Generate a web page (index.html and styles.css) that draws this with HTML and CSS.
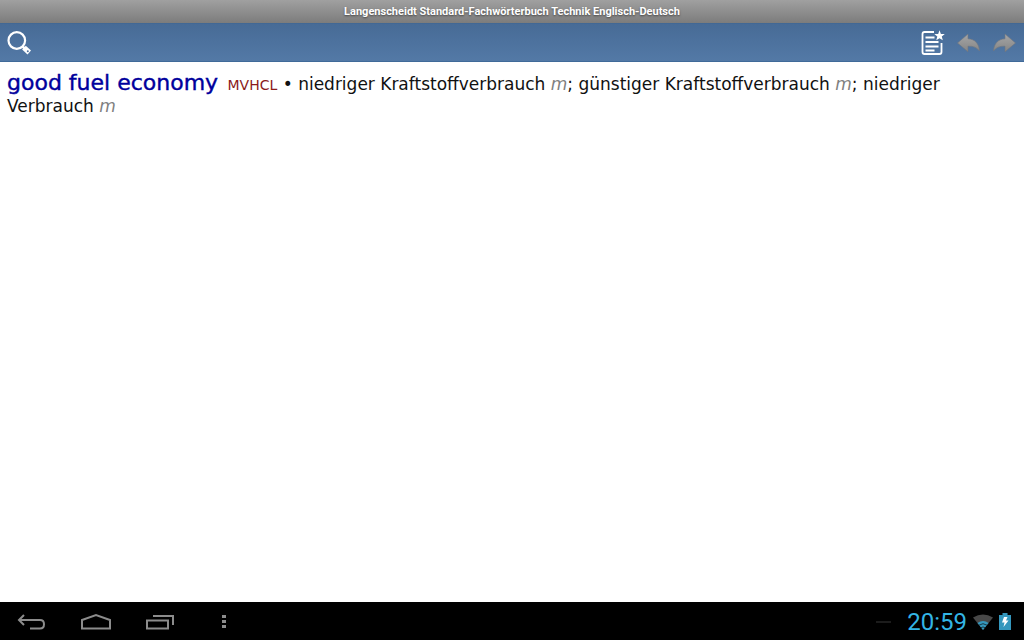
FILE: index.html
```html
<!DOCTYPE html>
<html lang="de">
<head>
<meta charset="utf-8">
<title>Langenscheidt Standard-Fachwörterbuch Technik Englisch-Deutsch</title>
<link rel="stylesheet" href="styles.css">
</head>
<body>
<header>
  <h1 class="title">Langenscheidt Standard-Fachwörterbuch Technik Englisch-Deutsch</h1>
  <div class="toolbar">
    <button class="tool" type="button" aria-label="Search">
      <svg width="26" height="26" viewBox="0 0 26 26" fill="none" stroke="#fff"><circle cx="10.8" cy="10.5" r="8.3" stroke-width="2.2"/><path d="M16.500 16.300l2 2" stroke-width="2.400"/><path d="M19.800 15.800l5.200 4.800-3.500 4-5.400-5z" fill="#fff" stroke="none"/><circle cx="21.800" cy="21.300" r="1" fill="#4d729f" stroke="none"/></svg>
    </button>
    <div class="group">
      <button class="tool" type="button" aria-label="Favorites">
        <svg width="26" height="26" viewBox="0 0 26 26" fill="none" stroke="#fff"><path d="M15 2H5.500Q3.500 2 3.500 4V22Q3.500 24 5.500 24H20.500Q22.500 24 22.500 22V13" stroke-width="1.800"/><path d="M6.500 7.500h9M6.500 12h13M6.500 16.500h13M6.500 20.500h9" stroke-width="2"/><path d="M20.500 .300l1.400 3.600 3.900.2-3 2.500 1 3.700-3.300-2.100-3.200 2.100 1-3.700-3-2.500 3.900-.2z" fill="#fff" stroke="none"/></svg>
      </button>
      <button class="tool" type="button" aria-label="Back">
        <svg width="26" height="26" viewBox="0 0 26 26"><defs><linearGradient id="g" x2="0" y2="1"><stop offset="0" stop-color="#a6a6a6"/><stop offset="1" stop-color="#858585"/></linearGradient></defs><path fill="url(#g)" stroke="#6f7680" stroke-width=".6" d="M2.500 13L13 4v4.800c7 .5 11 4.700 11.500 12.200-2.500-3.500-6-5-11.500-4.800v5.600z"/></svg>
      </button>
      <button class="tool" type="button" aria-label="Forward">
        <svg width="26" height="26" viewBox="0 0 26 26"><path fill="url(#g)" stroke="#6f7680" stroke-width=".6" d="M24.500 13L14 4v4.800C7 9.300 3 13.500 2.500 21c2.500-3.500 6-5 11.500-4.800v5.600z"/></svg>
      </button>
    </div>
  </div>
</header>
<main class="entry">
  <p><b class="headword">good fuel economy</b> <span class="domain">MVHCL</span> • niedriger Kraftstoffverbrauch <i>m</i>; günstiger Kraftstoffverbrauch <i>m</i>; niedriger Verbrauch <i>m</i></p>
</main>
<footer class="system">
  <nav class="keys">
    <button type="button" aria-label="Back"><svg width="32" height="20" viewBox="0 0 32 20"><path d="M8 2L3 7l5 5M3.500 7H24q4 0 4 4.200T24 15.500H14"/></svg></button>
    <button type="button" aria-label="Home"><svg width="32" height="20" viewBox="0 0 32 20"><path d="M2 15.500V7L16 2l14 5v8.500z"/></svg></button>
    <button type="button" aria-label="Recent apps"><svg width="32" height="20" viewBox="0 0 32 20"><path d="M3 7.500h21v8H3zM9 3h20v9"/></svg></button>
    <button type="button" aria-label="Menu"><svg width="32" height="20" viewBox="0 0 32 20"><path class="dots" d="M14 2h4v3h-4zM14 7h4v3h-4zM14 12h4v3h-4z"/></svg></button>
  </nav>
  <div class="status">
    <span class="dash"></span>
    <time>20:59</time>
    <svg width="20" height="18" viewBox="0 0 20 18"><path fill="#484848" d="M0 4.500Q10-1.500 20 4.500L10 17z"/><path fill="#3497bd" d="M4.500 10q5.500-4 11 0L10 17z"/><path fill="none" stroke="#163744" d="M6 12.200q4-3 8 0M8 14.700q2-1.500 4 0"/></svg>
    <svg width="12" height="18" viewBox="0 0 12 18"><path fill="#3497bd" d="M3.500 0h5v2H12v15H0V2h3.500z"/><path fill="#fff" d="M5 4L3 9.500h2.500L4.500 14l5-6.500H7L8.500 4z"/></svg>
  </div>
</footer>
</body>
</html>
```
FILE: styles.css
```css
* { box-sizing: border-box; }

body {
  margin: 0;
  min-height: 100vh;
  display: flex;
  flex-direction: column;
  background: #fff;
  font-family: "DejaVu Sans", sans-serif;
}

button {
  display: flex;
  padding: 0;
  border: 0;
  background: none;
  cursor: pointer;
}

.title {
  margin: 0;
  background: linear-gradient(#a0a0a0, #7c7c7c);
  color: #fff;
  font: bold 11px/23px Roboto, sans-serif;
  text-align: center;
  text-shadow: 0 1px 2px #444;
}

.toolbar {
  display: flex;
  justify-content: space-between;
  align-items: center;
  height: 39px;
  padding: 0 7px 0 6px;
  border-top: 1px solid #426894;
  border-bottom: 1px solid #406a99;
  background: linear-gradient(#476b96, #5379a6);
}

.group {
  display: flex;
  gap: 10px;
}

.entry {
  flex: 1;
  padding: 10px 7px;
  font-size: 17px;
  line-height: 21px;
  color: #111;
}

.entry p { margin: 0; }

.headword {
  margin-right: 4px;
  color: #00009c;
  font-size: 22px;
  font-weight: normal;
  -webkit-text-stroke: 0.4px #00009c;
}

.domain {
  color: #8b1a1a;
  font-size: 14px;
}

.entry i { color: #808080; }

.system {
  display: flex;
  justify-content: space-between;
  align-items: center;
  height: 38px;
  padding: 2px 13px 0 16px;
  background: #000;
}

.keys {
  display: flex;
  gap: 32px;
}

.keys svg { margin-top: 2px; }

.keys path {
  fill: none;
  stroke: #8c8c8c;
  stroke-width: 2;
}

.keys .dots {
  fill: #8c8c8c;
  stroke: none;
}

.status {
  display: flex;
  align-items: center;
  gap: 6px;
}

.dash {
  width: 15px;
  height: 2px;
  margin-right: 10px;
  background: #1c1c1c;
}

time {
  color: #33b5e5;
  font: 24px/36px Roboto, sans-serif;
}
```
